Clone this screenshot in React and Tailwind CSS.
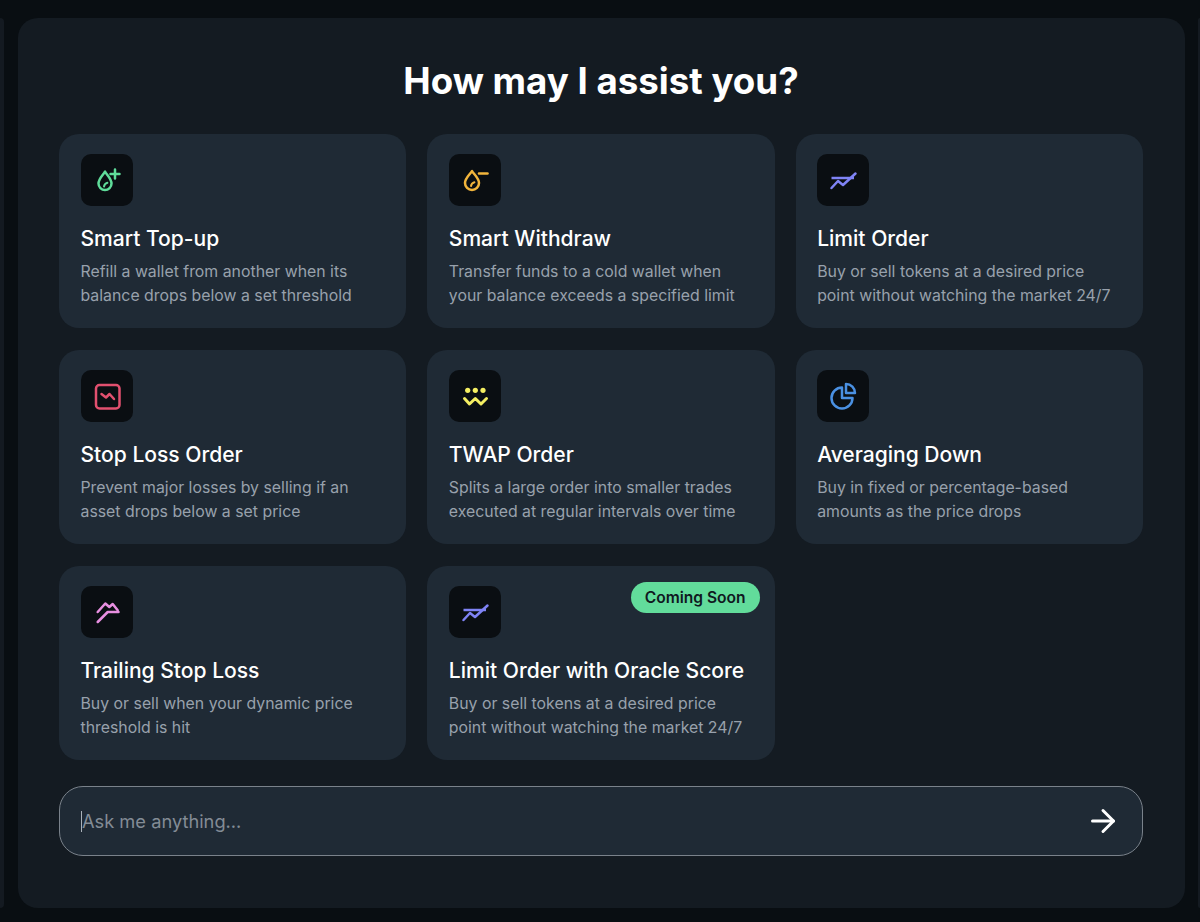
import React from "react";
import { ArrowRight } from "lucide-react";

// icons are drawn on the 52px tile grid
const IconShell = ({ color, children }) => (
  <div className="w-[52px] h-[52px] rounded-[10px] bg-[#0a0e12] shrink-0">
    <svg
      width="52"
      height="52"
      viewBox="0 0 52 52"
      fill="none"
      stroke={color}
      strokeWidth="2.5"
      strokeLinecap="round"
      strokeLinejoin="round"
    >
      {children}
    </svg>
  </div>
);

const TopUpIcon = () => (
  <IconShell color="#5fdc9a">
    <path d="M24 17.5 C22.5 20.5 17.5 24.5 17.5 29.5 a6.5 6.5 0 0 0 13 0 C30.5 24.5 25.5 20.5 24 17.5Z" />
    <path d="M23 32.5 c0.3-2 1.5-3.2 3.4-3.8" strokeWidth="2" />
    <path d="M34 15.5v9M29.5 20h9" />
  </IconShell>
);

const WithdrawIcon = () => (
  <IconShell color="#f2b53c">
    <path d="M23 17 C21.5 20 16 24 16 29 a7 7 0 0 0 14 0 C30 24 24.5 20 23 17Z" />
    <path d="M22 32 c0.3-2 1.5-3.2 3.4-3.8" strokeWidth="2" />
    <path d="M30 19.5h8.5" />
  </IconShell>
);

const LimitIcon = () => (
  <IconShell color="#7f83f5">
    <path d="M14.5 24h22.5" strokeLinecap="butt" />
    <path d="M14.5 34 L21 27 L26 31 L38.5 19.5" />
  </IconShell>
);

const StopLossIcon = () => (
  <IconShell color="#e2506f">
    <rect x="15" y="15" width="23.5" height="23.5" rx="3.5" />
    <path d="M20.5 24 L25 27.5 L28.5 24 L33 29" />
  </IconShell>
);

const TwapIcon = () => (
  <IconShell color="#f4ee62">
    <circle cx="18.7" cy="20.3" r="2.6" fill="#f4ee62" stroke="none" />
    <circle cx="26.3" cy="20.3" r="2.6" fill="#f4ee62" stroke="none" />
    <circle cx="34" cy="20.3" r="2.6" fill="#f4ee62" stroke="none" />
    <path d="M15.5 28.5 L20.5 34 L26.3 28.5 L32 34 L37.5 28.5" strokeWidth="3" />
  </IconShell>
);

const PieIcon = () => (
  <IconShell color="#4a90e2">
    <path d="M25 17.5 A10.5 10.5 0 1 0 35.5 28 H25 Z" />
    <path d="M29 14 A9 9 0 0 1 38 23 H29 Z" />
  </IconShell>
);

const TrailingIcon = () => (
  <IconShell color="#e88fe0">
    <path d="M16.7 26 L24.3 17.5 L28.3 21 L31.7 18 L36.7 24.3" />
    <path d="M16.7 36 L26.7 26 H37.5" />
  </IconShell>
);

const CARDS = [
  {
    title: "Smart Top-up",
    desc: ["Refill a wallet from another when its", "balance drops below a set threshold"],
    icon: TopUpIcon,
  },
  {
    title: "Smart Withdraw",
    desc: ["Transfer funds to a cold wallet when", "your balance exceeds a specified limit"],
    icon: WithdrawIcon,
  },
  {
    title: "Limit Order",
    desc: ["Buy or sell tokens at a desired price", "point without watching the market 24/7"],
    icon: LimitIcon,
  },
  {
    title: "Stop Loss Order",
    desc: ["Prevent major losses by selling if an", "asset drops below a set price"],
    icon: StopLossIcon,
  },
  {
    title: "TWAP Order",
    desc: ["Splits a large order into smaller trades", "executed at regular intervals over time"],
    icon: TwapIcon,
  },
  {
    title: "Averaging Down",
    desc: ["Buy in fixed or percentage-based", "amounts as the price drops"],
    icon: PieIcon,
  },
  {
    title: "Trailing Stop Loss",
    desc: ["Buy or sell when your dynamic price", "threshold is hit"],
    icon: TrailingIcon,
  },
  {
    title: "Limit Order with Oracle Score",
    desc: ["Buy or sell tokens at a desired price", "point without watching the market 24/7"],
    icon: LimitIcon,
    soon: true,
  },
];

function Card({ title, desc, icon: Icon, soon }) {
  return (
    <div className="relative h-[194px] rounded-[20px] bg-[#1f2a35] pt-[20px] px-[21.5px]">
      {soon && (
        <span className="absolute top-[16px] right-[15px] h-[31px] w-[129px] rounded-full bg-[#62dc9b] text-[#10191f] text-[15.6px] font-semibold flex items-center justify-center">
          Coming Soon
        </span>
      )}
      <Icon />
      <h3 className="mt-[17.5px] text-[21.05px] leading-[30px] font-[550] text-white">{title}</h3>
      <p className="mt-[6px] text-[15.85px] leading-[24.5px] text-[#98a1ac]">
        {desc[0]}
        <br />
        {desc[1]}
      </p>
    </div>
  );
}

export default function App() {
  return (
    <div className="w-[1200px] h-[922px] overflow-hidden bg-[#090e12] flex pt-[18px] pb-[14px] font-['Inter',sans-serif]">
      <div className="w-[4px] shrink-0 rounded-r-[20px] bg-[#141a21]" />
      <main className="ml-[14px] w-[1167px] shrink-0 rounded-[20px] bg-[#141b22] pl-[41px] pr-[42px] pt-[37px]">
        <h1 className="text-center text-[36.7px] leading-[52px] font-bold text-white">
          How may I assist you?
        </h1>
        <div className="mt-[27px] grid grid-cols-3 gap-x-[21px] gap-y-[22px]">
          {CARDS.map((c) => (
            <Card key={c.title} {...c} />
          ))}
        </div>
        <div className="mt-[26px] h-[70px] rounded-[24px] border border-[#7a828b] bg-[#1f2a35] flex items-center pl-[21px] pr-[21px]">
          <span className="w-px h-[21px] bg-[#aab2ba] shrink-0" />
          <span className="mt-[1px] text-[18.25px] text-[#838c96] flex-1">Ask me anything...</span>
          <ArrowRight size={36} strokeWidth={2} color="#ffffff" />
        </div>
      </main>
      <div className="ml-[13px] w-[2px] shrink-0 rounded-l-[20px] bg-[#141a21]" />
    </div>
  );
}
